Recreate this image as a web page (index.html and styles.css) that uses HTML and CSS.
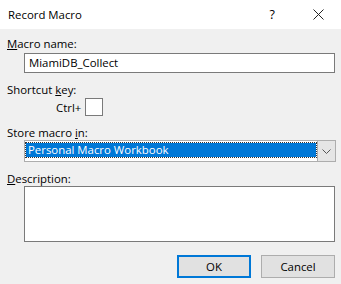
FILE: index.html
```html
<!DOCTYPE html>
<html lang="en">

<head>
    <meta charset="UTF-8">
    <meta name="viewport" content="width=device-width, initial-scale=1.0">
    <title>Record Macro</title>
    <link rel="stylesheet" href="styles.css">
</head>

<body>
    <div class="dialog">
        <div class="titlebar">
            <span class="title">Record Macro</span>
            <span class="help">?</span>
            <svg class="close" width="11" height="11" viewBox="0 0 11 11">
                <path d="M0.5 0.5 L10.5 10.5 M10.5 0.5 L0.5 10.5" stroke="#222" stroke-width="1" fill="none" />
            </svg>
        </div>
        <div class="content">
            <div class="label"><u>M</u>acro name:</div>
            <div class="textbox">MiamiDB_Collect</div>

            <div class="label gap">Shortcut <u>k</u>ey:</div>
            <div class="shortcut">
                <span class="ctrl">Ctrl+</span>
                <span class="keybox"></span>
            </div>

            <div class="label gap">Store macro <u>i</u>n:</div>
            <div class="combo">
                <div class="combo-value"><span class="selected">Personal Macro Workbook</span></div>
                <div class="combo-arrow">
                    <svg width="9" height="5" viewBox="0 0 9 5">
                        <path d="M0.5 0.5 L4.5 4.5 L8.5 0.5" stroke="#555" stroke-width="1" fill="none" />
                    </svg>
                </div>
            </div>

            <div class="label gap"><u>D</u>escription:</div>
            <div class="textarea"></div>

            <div class="buttons">
                <button class="btn default">OK</button>
                <button class="btn">Cancel</button>
            </div>
        </div>
    </div>
</body>

</html>
```

FILE: styles.css
```css
body {
    margin: 0;
    padding: 0;
    font-family: "Open Sans", "Noto Sans", Arial, sans-serif;
    font-size: 11.4px;
    color: #000;
    background-color: #f0f0f0;
}

.dialog {
    width: 341px;
    height: 284px;
    background-color: #f0f0f0;
    overflow: hidden;
}

.titlebar {
    display: flex;
    align-items: center;
    height: 29px;
    background-color: #fff;
    padding-left: 8px;
}

.title {
    flex: 1;
}

.help {
    font-size: 12.5px;
    margin-right: 38px;
}

.close {
    margin-right: 17px;
}

.content {
    padding: 7px 6px 0 7px;
}

.label {
    line-height: 15px;
}

.label.gap {
    margin-top: 9px;
}

.textbox {
    margin: 2px 0 0 17px;
    width: 299px;
    height: 18px;
    line-height: 18px;
    border: 1px solid #7a7a7a;
    background: #fff;
    padding-left: 4px;
    padding-right: 6px;
}

.shortcut {
    display: flex;
    align-items: center;
    margin-top: 1px;
    padding-left: 49px;
}

.ctrl {
    width: 29px;
}

.keybox {
    width: 16px;
    height: 16px;
    border: 1px solid #7a7a7a;
    background: #fff;
}

.combo {
    display: flex;
    margin-left: 17px;
    width: 312px;
    height: 22px;
    border: 1px solid #adadad;
    box-sizing: border-box;
    background: #fff;
}

.combo-value {
    flex: 1;
    padding: 2px 1px;
}

.selected {
    display: block;
    height: 14px;
    line-height: 14px;
    background-color: #0078d7;
    color: #fff;
    padding-left: 2px;
    outline: 1px dotted #333;
}

.combo-arrow {
    width: 17px;
    display: flex;
    align-items: center;
    justify-content: center;
    background-color: #e5e5e5;
    border-left: 1px solid #adadad;
}

.textarea {
    margin-left: 17px;
    width: 309px;
    height: 54px;
    border: 1px solid #7a7a7a;
    background: #fff;
}

.buttons {
    display: flex;
    justify-content: flex-end;
    gap: 10px;
    margin-top: 13px;
}

.btn {
    font-family: inherit;
    font-size: 11.4px;
    width: 74px;
    height: 23px;
    padding: 0;
    background-color: #e1e1e1;
    border: 1px solid #adadad;
    color: #000;
}

.btn.default {
    border: 2px solid #0078d7;
}
```
